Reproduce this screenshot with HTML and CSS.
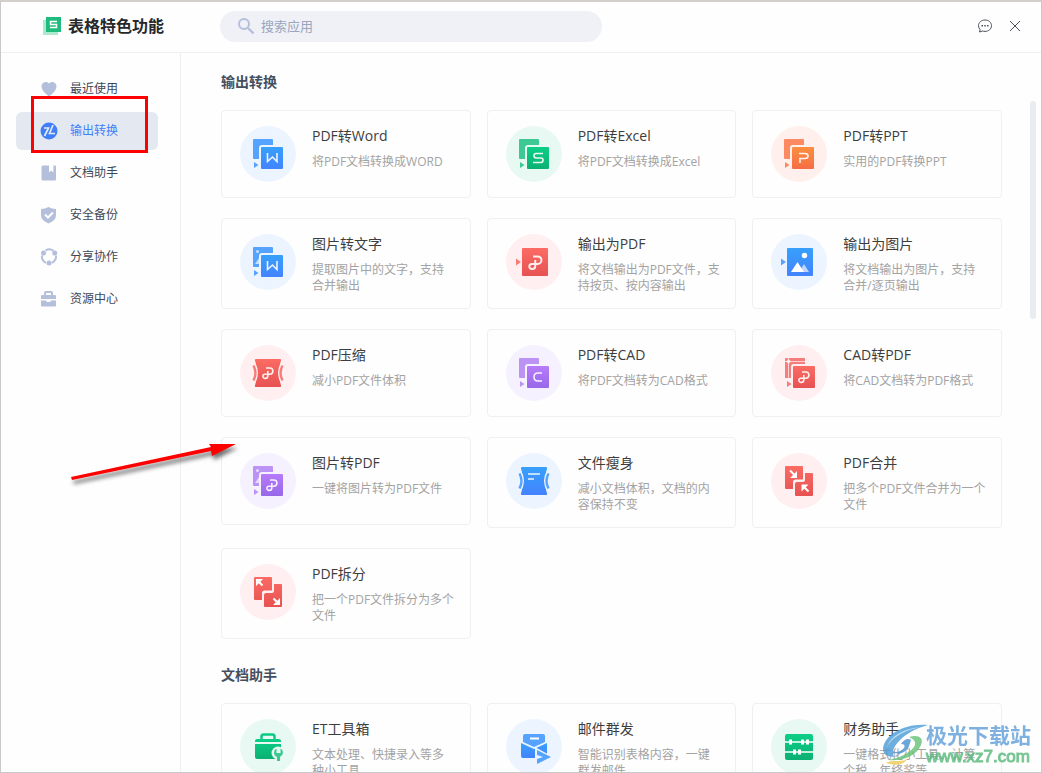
FILE: index.html
```html
<!DOCTYPE html>
<html lang="zh-CN">
<head>
<meta charset="utf-8">
<meta name="viewport" content="width=device-width, initial-scale=1">
<title>表格特色功能</title>
<link rel="stylesheet" href="styles.css">
</head>
<body>
<svg class="sprite" aria-hidden="true">
  <defs>
    <linearGradient id="blue" x2="0" y2="1"><stop stop-color="#37a0fb"/><stop offset="1" stop-color="#4383ff"/></linearGradient>
    <linearGradient id="green" x2="0" y2="1"><stop stop-color="#0bcf87"/><stop offset="1" stop-color="#0bb072"/></linearGradient>
    <linearGradient id="orange" x2="0" y2="1"><stop stop-color="#fa8f40"/><stop offset="1" stop-color="#f66d45"/></linearGradient>
    <linearGradient id="red" x2="0" y2="1"><stop stop-color="#fb6c64"/><stop offset="1" stop-color="#e65252"/></linearGradient>
    <linearGradient id="purple" x2="0" y2="1"><stop stop-color="#b77bfb"/><stop offset="1" stop-color="#9668e8"/></linearGradient>
  </defs>
  <symbol id="pages" viewBox="0 0 56 56">
    <path class="tint" d="M14 13h18q1 0 1 1v5H22q-3 0-3 3v11h-5q-1 0-1-1V14q0-1 1-1zM14 36l4.500 3-4.500 3z"/>
    <rect x="21" y="21" width="22" height="22" rx="1"/>
  </symbol>
  <symbol id="photo-pages" viewBox="0 0 56 56">
    <use href="#pages"/>
    <circle class="pale" cx="17.500" cy="17.500" r="1.500"/>
    <path class="pale" d="M15 30l4-6v6z"/>
  </symbol>
  <symbol id="cad-pages" viewBox="0 0 56 56">
    <path class="tint" d="M15 13h19v6H23q-3 0-3 3v11h-6V14q0-1 1-1zM16 36l4.500 3-4.500 3z"/>
    <path class="pale-line" d="M14 16.500h20M17.500 13v20"/><circle class="pale" cx="17.500" cy="16.500" r="2"/>
    <rect x="22" y="21" width="22" height="22" rx="1"/>
  </symbol>
  <symbol id="swirl" viewBox="0 0 14 14"><path class="mark" d="M5 2h3.800a3.100 3.100 0 0 1 0 6.200H4a2.100 2.100 0 1 0 0 4.200h.3A2.500 2.500 0 0 0 6.800 10V5"/></symbol>
  <symbol id="squeeze" viewBox="0 0 56 56">
    <path d="M16 14h24q1.600 0 1 1.500-4 12.500 0 25 .6 1.500-1 1.500H16q-1.600 0-1-1.500 4-12.500 0-25-.6-1.500 1-1.500z"/>
    <path class="cut" d="M15 17.500q6 10.500 0 21l-5-3v-15zM41 17.500q-6 10.500 0 21l5-3v-15z"/>
    <path class="side" d="M13.500 20.500q4 7.500 0 15M42.500 20.500q-4 7.500 0 15"/>
  </symbol>
  <symbol id="puzzle" viewBox="0 0 56 56">
    <path d="M15 13h16q1 0 1 1v12.500h-7.500q-2.500 0-2.500 2.500v7h-7q-1 0-1-1V14q0-1 1-1zM34 20h7q1 0 1 1v21q0 1-1 1H25q-1 0-1-1V31q0-2 2-2h6q2 0 2-2z"/>
  </symbol>
</svg>

<div class="window">
  <header class="topbar">
    <div class="brand">
      <svg class="brand-icon" viewBox="0 0 18 18" aria-hidden="true"><path fill="#ace9cf" d="M0 3h15v15H0z"/><path fill="#1fbb7d" d="M3 0h15v15H3z"/><path fill="none" stroke="#fff" stroke-width="1.500" d="M14 4.500H7.500v3h6v3H7"/></svg>
      <h1>表格特色功能</h1>
    </div>
    <label class="search">
      <svg viewBox="0 0 18 18" aria-hidden="true"><circle cx="7" cy="7" r="5" fill="none" stroke="#b3bfdb" stroke-width="2"/><path d="M11 11l5.500 5.500" stroke="#b3bfdb" stroke-width="2.400"/></svg>
      <input type="text" placeholder="搜索应用" aria-label="搜索应用">
    </label>
    <div class="tools">
      <button type="button" aria-label="反馈"><svg viewBox="0 0 16 16" fill="none" stroke="#4a4f5a"><path d="M8 2c3.700 0 6.500 2.500 6.500 5.700S11.700 13.400 8 13.400c-.9 0-1.700-.1-2.500-.4L2.500 14l.6-2.500A5.400 5.400 0 0 1 1.500 7.700C1.500 4.500 4.300 2 8 2z"/><path stroke-width="1.500" d="M4.500 7.700H6m1.300 0h1.500m1.300 0h1.500"/></svg></button>
      <button type="button" aria-label="关闭"><svg viewBox="0 0 16 16" fill="none" stroke="#4a4f5a"><path d="M3 3l10 10M13 3L3 13"/></svg></button>
    </div>
  </header>

  <div class="body">
    <nav class="sidebar" aria-label="分类">
      <a href="#recent"><svg viewBox="0 0 18 18"><path d="M9 16.500C4 13 1.500 9.500 1.500 6.300 1.500 1.800 7 .5 9 3.500c2-3 7.500-1.700 7.500 2.800 0 3.200-2.500 6.700-7.500 10.200z"/></svg>最近使用</a>
      <a class="active" href="#export"><svg viewBox="0 0 18 18"><circle cx="9" cy="9" r="8.500"/><path fill="none" stroke="#e4e9f1" stroke-width="1.700" d="M4 6h4.500L4.500 14M13 3l-3.500 8.500H15"/></svg>输出转换</a>
      <a href="#docs"><svg viewBox="0 0 18 18"><path d="M3 1.500h6v7l2.200-2 2.200 2v-7H15q1 0 1 1v13q0 1-1 1H3q-1.500 0-1.500-1.500V3Q1.500 1.500 3 1.500z"/></svg>文档助手</a>
      <a href="#backup"><svg viewBox="0 0 18 18"><path d="M8.500 1Q12 3 16 3v6q0 5.500-7.500 8.500Q1 14.500 1 9V3q4 0 7.500-2z"/><path fill="none" stroke="#fff" stroke-width="2" d="M5 8.500l3 3 5-5"/></svg>安全备份</a>
      <a href="#share"><svg viewBox="0 0 18 18"><path fill="none" stroke="#b3bfdb" stroke-width="2" d="M5.500 2.500a7 7 0 0 1 8 .3M16 7.500q.5 4.500-4 7.500M6 15Q1.500 12.500 2 7.500"/><circle cx="3.500" cy="5" r="2.500"/><circle cx="14.700" cy="5" r="2.500"/><circle cx="9" cy="15" r="2.500"/></svg>分享协作</a>
      <a href="#resource"><svg viewBox="0 0 18 18"><path fill="none" stroke="#b3bfdb" stroke-width="2" d="M5 5V3q0-1 1-1h5q1 0 1 1v2"/><path d="M2 5h13q1 0 1 1v3H1V6q0-1 1-1zM1 10.500h5.500V12h4v-1.500H16v5q0 1-1 1H2q-1 0-1-1z"/></svg>资源中心</a>
    </nav>

    <main class="content">
      <section id="export">
        <h2>输出转换</h2>
        <div class="grid">
          <a class="card blue" href="#"><svg class="disc" fill="url(#blue)" viewBox="0 0 56 56"><use href="#pages"/><path class="mark" d="M27.500 27v8.500l5-4.500 4.500 4.500V27"/></svg><span class="info"><strong>PDF转Word</strong><span>将PDF文档转换成WORD</span></span></a>
          <a class="card green" href="#"><svg class="disc" fill="url(#green)" viewBox="0 0 56 56"><use href="#pages"/><path class="mark" d="M37 27.500h-7q-2 0-2 2.200t2 2.300h5q2 0 2 2.200t-2 2.300h-8"/></svg><span class="info"><strong>PDF转Excel</strong><span>将PDF文档转换成Excel</span></span></a>
          <a class="card orange" href="#"><svg class="disc" fill="url(#orange)" viewBox="0 0 56 56"><use href="#pages"/><path class="mark" d="M28 27.500h6q3 0 3 2.500t-3 2.500h-5V37"/></svg><span class="info"><strong>PDF转PPT</strong><span>实用的PDF转换PPT</span></span></a>

          <a class="card blue" href="#"><svg class="disc" fill="url(#blue)" viewBox="0 0 56 56"><use href="#photo-pages"/><path class="mark" d="M27.500 27v8.500l5-4.500 4.500 4.500V27"/></svg><span class="info"><strong>图片转文字</strong><span>提取图片中的文字，支持合并输出</span></span></a>
          <a class="card red" href="#"><svg class="disc" fill="url(#red)" viewBox="0 0 56 56"><path class="tint" d="M10 24.500l5 3.500-5 3.500z"/><rect x="16" y="14" width="26" height="28" rx="1"/><use href="#swirl" x="21" y="20" width="17" height="17"/></svg><span class="info"><strong>输出为PDF</strong><span>将文档输出为PDF文件，支持按页、按内容输出</span></span></a>
          <a class="card blue" href="#"><svg class="disc" fill="url(#blue)" viewBox="0 0 56 56"><path class="tint" d="M10 24.500l5 3.500-5 3.500z"/><rect x="16" y="14" width="26" height="28" rx="1"/><circle cx="33.500" cy="21.500" r="2.700" fill="#fff"/><path class="pale" d="M28 38l5-8 5 8z"/><path fill="#fff" d="M20 38l6.500-10 6.500 10z"/></svg><span class="info"><strong>输出为图片</strong><span>将文档输出为图片，支持合并/逐页输出</span></span></a>

          <a class="card red" href="#"><svg class="disc" fill="url(#red)" viewBox="0 0 56 56"><use href="#squeeze"/><use href="#swirl" x="21" y="21" width="14" height="14"/></svg><span class="info"><strong>PDF压缩</strong><span>减小PDF文件体积</span></span></a>
          <a class="card purple" href="#"><svg class="disc" fill="url(#purple)" viewBox="0 0 56 56"><use href="#pages"/><path class="mark" d="M36 28h-4q-4 0-4 4t4 4h4"/></svg><span class="info"><strong>PDF转CAD</strong><span>将PDF文档转为CAD格式</span></span></a>
          <a class="card red" href="#"><svg class="disc" fill="url(#red)" viewBox="0 0 56 56"><use href="#cad-pages"/><use href="#swirl" x="26" y="25" width="14" height="14"/></svg><span class="info"><strong>CAD转PDF</strong><span>将CAD文档转为PDF格式</span></span></a>

          <a class="card purple" href="#"><svg class="disc" fill="url(#purple)" viewBox="0 0 56 56"><use href="#photo-pages"/><use href="#swirl" x="25" y="25" width="14" height="14"/></svg><span class="info"><strong>图片转PDF</strong><span>一键将图片转为PDF文件</span></span></a>
          <a class="card blue" href="#"><svg class="disc" fill="url(#blue)" viewBox="0 0 56 56"><use href="#squeeze"/><path class="mark" d="M22 21h12M22 26h6"/></svg><span class="info"><strong>文件瘦身</strong><span>减小文档体积，文档的内容保持不变</span></span></a>
          <a class="card red" href="#"><svg class="disc" fill="url(#red)" viewBox="0 0 56 56"><use href="#puzzle"/><path class="arrow" d="M19 17.500l5.500 5.500M37.500 38.500L32 33"/><path class="head" d="M26 18v7h-7zM30.500 31.500h7l-7 7z"/></svg><span class="info"><strong>PDF合并</strong><span>把多个PDF文件合并为一个文件</span></span></a>

          <a class="card red" href="#"><svg class="disc" fill="url(#red)" viewBox="0 0 56 56"><use href="#puzzle"/><path class="arrow" d="M22.500 21.500L17.500 16.500M33.500 34.500l5 5"/><path class="head" d="M16 15h7l-7 7zM40 34v7h-7z"/></svg><span class="info"><strong>PDF拆分</strong><span>把一个PDF文件拆分为多个文件</span></span></a>
        </div>
      </section>

      <section id="docs">
        <h2>文档助手</h2>
        <div class="grid">
          <a class="card green" href="#"><svg class="disc" fill="url(#green)" viewBox="0 0 56 56"><path fill="none" stroke="#0bca84" stroke-width="2.500" d="M21.500 20v-2.500q0-2 2-2h9q2 0 2 2V20"/><path d="M17 20h22q2 0 2 2v1H15v-1q0-2 2-2zM15 25h26v15H17q-2 0-2-2z"/><circle class="cut" cx="38" cy="34" r="6.500"/><path class="tint" d="M36.500 29.500v4.500h4v-4.500q2.500 1.200 2.500 4t-3 4.500V42h-3v-4q-3-1.500-3-4.500t2.500-4z"/></svg><span class="info"><strong>ET工具箱</strong><span>文本处理、快捷录入等多种小工具</span></span></a>
          <a class="card blue" href="#"><svg class="disc" fill="url(#blue)" viewBox="0 0 56 56"><path class="tint" d="M19 15h18q2 0 2 2v6l-11 5-11-5v-6q0-2 2-2z"/><path class="arrow" d="M24 19.500h9"/><path d="M15 24l13 6 13-6v15H17q-2 0-2-2z"/><path class="cut" d="M29 28l18 10-18 10z"/><path class="tint" d="M31 31l14 7-14 7v-5l6-2-6-2z"/></svg><span class="info"><strong>邮件群发</strong><span>智能识别表格内容，一键群发邮件</span></span></a>
          <a class="card green" href="#"><svg class="disc" fill="url(#green)" viewBox="0 0 56 56"><rect x="14" y="15" width="28" height="26" rx="2"/><path fill="none" stroke="#fff" stroke-width="1.500" d="M14 23h28M14 33h28"/><path fill="none" stroke="#fff" stroke-width="3" d="M19.500 20.500v5M31.500 20.500v5M36.500 20.500v5M23.500 30.500v5M28.500 30.500v5"/></svg><span class="info"><strong>财务助手</strong><span>一键格式化小工具、计算个税、年终奖等</span></span></a>
        </div>
      </section>
    </main>
    <div class="scrollbar"><div class="thumb"></div></div>
  </div>

  <div class="highlight"></div>
  <svg class="pointer" viewBox="0 0 190 60" aria-hidden="true"><path d="M11 47L151 17l-2-3 27 0-24 12-1-5L12 50z" fill="red"/></svg>
  <div class="watermark">
    <svg viewBox="0 0 46 44" aria-hidden="true">
      <path fill="#4a9bd8" d="M46 2C22 0 2 12 1 26c0 5 4 8 11 8C7 26 20 9 46 2z"/>
      <path fill="#a9d5f2" d="M38 4C20 6 8 14 5 24c4-9 16-16 33-20z"/>
      <path fill="#4a8fd0" d="M9 28q8 6 17-2l3-9q-5-3-10 4 5 0 3 4-5 6-13 3z"/>
      <path fill="#65c176" d="M27 14c10-3 15 1 12 8-4 10-18 17-33 15 13-2 25-9 27-15 1-4-2-6-6-8z"/>
      <path fill="#eec94d" d="M4 40c7-4 14 0 21-4-3 6-12 7-21 4z"/>
    </svg>
    <div class="watermark-text"><b>极光下载站</b><span>www.xz7.com</span></div>
  </div>
</div>
</body>
</html>
```

FILE: styles.css
```css
* { box-sizing: border-box; }

body {
  margin: 0;
  font-family: "Open Sans", "Noto Sans CJK SC", sans-serif;
  font-size: 12px;
  color: #3d4757;
}

h1, h2 { margin: 0; }
a { color: inherit; text-decoration: none; }
.sprite { position: absolute; width: 0; height: 0; }

.window {
  position: relative;
  display: flex;
  flex-direction: column;
  height: 100vh;
  overflow: hidden;
  background: #fefefe;
  border: 1px solid #c9c9c9;
  border-top: 2px solid #d3cfcb;
}

/* Top bar */
.topbar {
  display: flex;
  align-items: center;
  flex: none;
  height: 51px;
  padding: 0 18px 2px 42px;
  border-bottom: 1px solid #f0f0f2;
}

.brand { display: flex; align-items: center; gap: 7px; width: 177px; }
.brand-icon { width: 18px; height: 18px; }
.brand h1 { font-size: 16px; line-height: 24px; font-weight: 700; color: #26282c; }

.search {
  display: flex;
  align-items: center;
  gap: 6px;
  flex: 0 1 382px;
  height: 31px;
  padding: 0 17px;
  border-radius: 16px;
  background: #eff1f6;
}
.search svg { width: 18px; height: 18px; }
.search input {
  flex: 1;
  min-width: 0;
  padding: 0;
  border: 0;
  outline: 0;
  background: none;
  font: inherit;
  font-size: 13px;
  line-height: 20px;
}
.search input::placeholder { color: #9aa5c0; opacity: 1; }

.tools { display: flex; gap: 14px; margin-left: auto; }
.tools button { display: flex; padding: 0; border: 0; background: none; }
.tools svg { width: 16px; height: 16px; }

.body { display: flex; flex: 1; min-height: 0; }

/* Sidebar */
.sidebar {
  display: flex;
  flex-direction: column;
  gap: 4px;
  flex: 0 0 180px;
  padding: 17px 22px 0 15px;
  border-right: 1px solid #f0f0f2;
}
.sidebar a {
  display: flex;
  align-items: center;
  gap: 12px;
  height: 38px;
  padding-left: 24px;
  border-radius: 6px;
  line-height: 18px;
}
.sidebar svg { width: 18px; height: 18px; fill: #b3bfdb; }
.sidebar .active { background: #e4e9f1; color: #417ff9; }
.sidebar .active svg { fill: #417ff9; }

/* Content */
.content {
  display: flex;
  flex-direction: column;
  gap: 26px;
  flex: 1;
  min-width: 0;
  padding: 19px 28px 0 40px;
  overflow: hidden;
}
.content section { flex: none; }
.content h2 { margin-bottom: 18px; font-size: 14px; line-height: 20px; font-weight: 700; color: #454f60; }

.grid {
  display: grid;
  grid-template-columns: repeat(3, minmax(0, 1fr));
  align-items: start;
  gap: 20px 16px;
}

.card {
  display: flex;
  align-items: flex-start;
  gap: 16px;
  min-height: 88px;
  padding: 15px 15px 14px 18px;
  border: 1px solid #f0f0f2;
  border-radius: 4px;
}
.disc { flex: none; width: 56px; height: 56px; border-radius: 50%; background: var(--disc); color: var(--tint); }
.info { display: flex; flex-direction: column; gap: 8px; min-width: 0; line-height: 16px; color: #a3a3a3; }
.info strong { font-size: 14px; line-height: 20px; font-weight: 400; color: #3d3d3d; }

.blue { --disc: #ecf5ff; --tint: #56a3ff; }
.green { --disc: #e8f9f3; --tint: #3dc993; }
.orange { --disc: #fff0ed; --tint: #fb8a63; }
.red { --disc: #ffeff0; --tint: #f57d7b; }
.purple { --disc: #f6f1ff; --tint: #bb93f5; }

.tint { fill: currentColor; }
.cut { fill: var(--disc); }
.pale { fill: #fff; fill-opacity: .65; }
.pale-line { fill: none; stroke: #fff; stroke-opacity: .65; }
.mark { fill: none; stroke: #fff; stroke-opacity: .9; stroke-width: 1.6; }
.side { fill: none; stroke: currentColor; stroke-width: 2.4; }
.arrow { fill: none; stroke: #fff; stroke-width: 2; }
.head { fill: #fff; }

/* Scrollbar */
.scrollbar { flex: 0 0 11px; padding: 48px 5px 0 0; }
.thumb { height: 218px; border-radius: 3px; background: #e9edf2; }

/* Annotations */
.highlight {
  position: absolute;
  left: 30px;
  top: 94px;
  width: 117px;
  height: 57px;
  border: 3px solid #f00;
}
.pointer {
  position: absolute;
  left: 59px;
  top: 428px;
  width: 190px;
  height: 60px;
  filter: drop-shadow(2px 4px 2px rgba(0, 0, 0, .55));
}
.watermark {
  position: absolute;
  right: 10px;
  bottom: 5px;
  display: flex;
  align-items: center;
  opacity: .8;
}
.watermark svg { width: 46px; height: 44px; }
.watermark-text { display: flex; flex-direction: column; margin-left: -2px; }
.watermark-text b { font-size: 21px; line-height: 24px; font-weight: 700; color: #5f9ed8; }
.watermark-text span { font-family: "Liberation Sans", Arial, sans-serif; font-size: 17px; line-height: 20px; color: #55b878; -webkit-text-stroke: 1px #55b878; }
```
